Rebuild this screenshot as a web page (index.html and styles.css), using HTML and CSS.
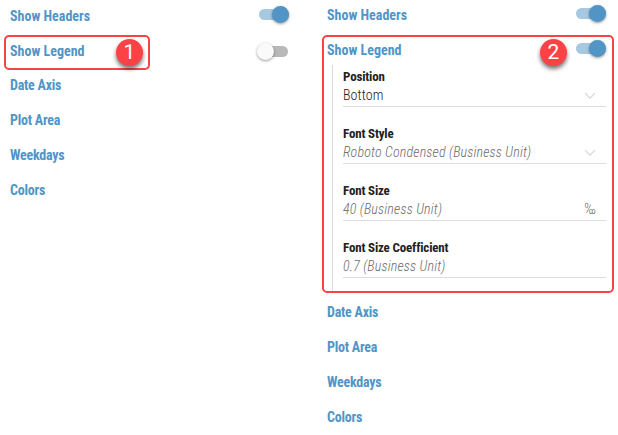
FILE: index.html
```html
<!DOCTYPE html>
<html lang="en">
<head>
<meta charset="utf-8">
<title>Chart settings</title>
<link rel="stylesheet" href="styles.css">
</head>
<body>
<main class="board">
  <section class="panel panel-closed">
    <div class="row"><span class="title">Show Headers</span><span class="toggle on"></span></div>
    <div class="row"><span class="title">Show Legend</span><span class="toggle off"></span></div>
    <div class="row short"><span class="title tight">Date Axis</span></div>
    <div class="row"><span class="title tight">Plot Area</span></div>
    <div class="row"><span class="title tight">Weekdays</span></div>
    <div class="row"><span class="title tight">Colors</span></div>
    <div class="outline outline-one"></div>
    <div class="badge badge-one"><span>1</span></div>
  </section>
  <section class="panel panel-open">
    <div class="row"><span class="title">Show Headers</span><span class="toggle on"></span></div>
    <div class="row"><span class="title">Show Legend</span><span class="toggle on"></span></div>
    <div class="fields">
      <div class="field">
        <div class="label">Position</div>
        <div class="value chosen"><span>Bottom</span><svg class="chevron" viewBox="0 0 12 8"><path d="M1 1l5 5.2L11 1"/></svg></div>
      </div>
      <div class="field">
        <div class="label">Font Style</div>
        <div class="value"><span>Roboto Condensed (Business Unit)</span><svg class="chevron" viewBox="0 0 12 8"><path d="M1 1l5 5.2L11 1"/></svg></div>
      </div>
      <div class="field">
        <div class="label">Font Size</div>
        <div class="value"><span>40 (Business Unit)</span><span class="unit">‰</span></div>
      </div>
      <div class="field">
        <div class="label">Font Size Coefficient</div>
        <div class="value"><span>0.7 (Business Unit)</span></div>
      </div>
    </div>
    <div class="row"><span class="title tight">Date Axis</span></div>
    <div class="row"><span class="title tight">Plot Area</span></div>
    <div class="row"><span class="title tight">Weekdays</span></div>
    <div class="row"><span class="title tight">Colors</span></div>
    <div class="outline outline-two"></div>
    <div class="badge badge-two"><span>2</span></div>
  </section>
</main>
</body>
</html>
```
FILE: styles.css
```css
* { box-sizing: border-box; }
body {
  margin: 0;
  background: #fff;
  font-family: "Roboto Condensed", Roboto, sans-serif;
  font-stretch: 75%;
  font-size: 14px;
}
.board { display: flex; height: 435px; overflow: hidden; }
.panel { position: relative; }
.panel-closed { width: 317px; padding: 6px 28px 0 10px; }
.panel-open { width: 301px; padding: 5px 12px 0 10px; }
.row {
  display: flex;
  justify-content: space-between;
  height: 20px;
  margin-bottom: 15px;
}
.row.short { margin-top: -1px; }
.title { color: #5195c6; font-weight: 700; line-height: 20px; white-space: nowrap; }
.tight { letter-spacing: -.23px; }
.toggle {
  position: relative;
  width: 30px;
  height: 11px;
  margin-top: 3px;
  border-radius: 6px;
}
.toggle::after {
  content: "";
  position: absolute;
  top: -3px;
  width: 17px;
  height: 17px;
  border-radius: 50%;
  box-shadow: 0 1px 3px rgba(0, 0, 0, .4);
}
.on { background: #a6c9e1; }
.on::after { right: 0; background: #5195c6; }
.off { width: 29px; margin: 5px 1px 0 0; background: #b8b8b8; }
.off::after { left: -2px; background: #fafafa; }
.fields {
  height: 227px;
  margin: 0 0 10px 5px;
  padding: 2px 0 0 10px;
  border-left: 1px solid #ddd;
}
.panel-open .row:nth-child(2) { margin-bottom: 5px; }
.field { height: 57px; }
.label {
  height: 19px;
  color: #212121;
  font-size: 13px;
  font-weight: 700;
  letter-spacing: -.17px;
  line-height: 19px;
}
.value {
  display: flex;
  justify-content: space-between;
  align-items: center;
  height: 21px;
  padding: 0 10px 2px 0;
  border-bottom: 1px solid #ddd;
  color: #6c6c6c;
  font-style: italic;
  font-weight: 300;
  letter-spacing: .16px;
  line-height: 18px;
  white-space: nowrap;
}
.chosen { color: #212121; font-style: normal; font-weight: 350; letter-spacing: .1px; }
.unit { font-style: normal; letter-spacing: 0; }
.chevron {
  width: 12px;
  height: 8px;
  margin-top: 1px;
  fill: none;
  stroke: #ddd;
  stroke-width: 1.5;
}
.outline { position: absolute; border: 2px solid #fb4346; border-radius: 5px; }
.outline-one { left: 4px; top: 35px; width: 146px; height: 35px; }
.outline-two { left: 5px; top: 35px; width: 292px; height: 258px; }
.badge {
  position: absolute;
  display: flex;
  align-items: center;
  justify-content: center;
  width: 27px;
  height: 27px;
  border-radius: 50%;
  background: #fb4346;
  box-shadow: 0 3px 4px rgba(0, 0, 0, .55);
  color: #fff;
  font-family: Roboto, sans-serif;
  font-stretch: 100%;
  font-size: 21px;
  line-height: 27px;
}
.badge-one { left: 116px; top: 39px; }
.badge-two { left: 223px; top: 39px; }
```
